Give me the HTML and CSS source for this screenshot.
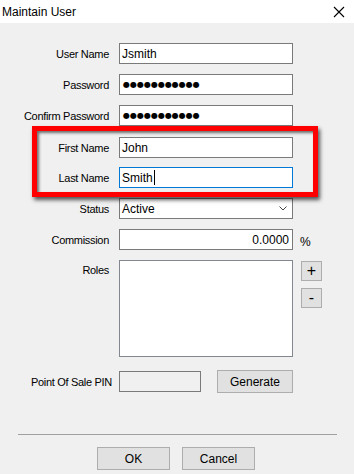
FILE: index.html
```html
<!DOCTYPE html>
<html>
<head>
<meta charset="utf-8">
<link rel="stylesheet" href="styles.css">
</head>
<body>
<div class="window">
  <div class="titlebar">
    <span class="title">Maintain User</span>
    <svg class="close" width="12" height="12" viewBox="0 0 12 12"><path d="M1 1 L11 11 M11 1 L1 11" stroke="#000" stroke-width="1.1" fill="none"/></svg>
  </div>
  <div class="content">
    <div class="form">
      <div class="row">
        <span class="lbl">User Name</span>
        <div class="field">Jsmith</div>
      </div>
      <div class="row">
        <span class="lbl">Password</span>
        <div class="field dots">●●●●●●●●●●●</div>
      </div>
      <div class="row">
        <span class="lbl">Confirm Password</span>
        <div class="field dots">●●●●●●●●●●●</div>
      </div>
      <div class="row row-first">
        <span class="lbl">First Name</span>
        <div class="field">John</div>
      </div>
      <div class="row row-last">
        <span class="lbl">Last Name</span>
        <div class="field focused">Smith<span class="caret"></span></div>
      </div>
      <div class="row">
        <span class="lbl">Status</span>
        <div class="field select">Active
          <svg class="chev" width="8" height="5" viewBox="0 0 8 5"><path d="M0.5 0.5 L4 4 L7.5 0.5" stroke="#444" stroke-width="1" fill="none"/></svg>
        </div>
      </div>
      <div class="row">
        <span class="lbl">Commission</span>
        <div class="field num">0.0000</div>
        <span class="pct">%</span>
      </div>
      <div class="row row-roles">
        <span class="lbl lbl-top">Roles</span>
        <div class="listbox"></div>
        <div class="side-btns">
          <button class="btn sq">+</button>
          <button class="btn sq">-</button>
        </div>
      </div>
      <div class="row row-pin">
        <span class="lbl lbl-pin">Point Of Sale PIN</span>
        <div class="pin-wrap">
          <div class="field pin"></div>
          <button class="btn gen">Generate</button>
        </div>
      </div>
    </div>
    <div class="highlight"></div>
    <div class="sep"></div>
    <div class="actions">
      <button class="btn act">OK</button>
      <button class="btn act">Cancel</button>
    </div>
  </div>
</div>
</body>
</html>
```
FILE: styles.css
```css
* { box-sizing: border-box; }
html, body {
  margin: 0;
  padding: 0;
  width: 354px;
  height: 474px;
  overflow: hidden;
  font-family: "Liberation Sans", Arial, sans-serif;
  color: #000;
}
.window {
  width: 354px;
  height: 474px;
  display: flex;
  flex-direction: column;
  background: #f0f0f0;
}
.titlebar {
  height: 23px;
  background: #fff;
  display: flex;
  align-items: center;
  justify-content: space-between;
  padding: 0 9px 0 2px;
}
.title {
  font-size: 12px;
  color: #000;
}
.close { display: block; }
.content {
  position: relative;
  flex: 1;
  padding-top: 20px;
}
.form {
  display: flex;
  flex-direction: column;
  gap: 10px;
}
.row {
  display: grid;
  grid-template-columns: 109px 174px auto;
  column-gap: 10px;
  align-items: center;
  font-size: 11px;
}
.row-first { margin-top: 1px; }
.row-last { margin-top: -1px; }
.lbl {
  text-align: right;
  white-space: nowrap;
  letter-spacing: -0.3px;
}
.lbl-top {
  align-self: start;
  padding-top: 4px;
}
.field {
  height: 21px;
  background: #fff;
  border: 1px solid #7a7a7a;
  padding: 0 2px;
  display: flex;
  align-items: center;
  font-size: 12px;
  white-space: nowrap;
}
.dots {
  font-family: "DejaVu Sans", sans-serif;
  font-size: 8px;
  letter-spacing: 0;
  padding-left: 3px;
}
.focused { border-color: #0078d7; }
.caret {
  display: inline-block;
  width: 1px;
  height: 15px;
  background: #000;
  margin-left: 1px;
}
.select {
  position: relative;
  justify-content: space-between;
  padding-right: 5px;
}
.num { justify-content: flex-end; padding-right: 3px; }
.pct {
  font-size: 12px;
  padding-top: 4px;
  margin-left: -3px;
}
.row-roles { align-items: start; }
.listbox {
  height: 97px;
  background: #fff;
  border: 1px solid #828790;
}
.side-btns {
  display: flex;
  flex-direction: column;
  gap: 7px;
  padding-top: 1px;
  margin-left: -2px;
}
.btn {
  font-family: "Liberation Sans", Arial, sans-serif;
  background: #e1e1e1;
  border: 1px solid #adadad;
  color: #000;
  padding: 0;
  font-size: 12px;
}
.sq {
  width: 21px;
  height: 20px;
  font-size: 16px;
  line-height: 16px;
}
.row-pin {
  margin-top: 3px;
  grid-template-columns: 112px auto;
  column-gap: 7px;
}
.pin-wrap {
  display: flex;
  align-items: center;
  gap: 16px;
}
.pin {
  width: 82px;
  background: #f0f0f0;
}
.gen {
  width: 76px;
  height: 23px;
}
.highlight {
  position: absolute;
  left: 32px;
  top: 103px;
  width: 286px;
  height: 71px;
  border: 5px solid #ff0000;
  box-shadow: 2px 3px 4px rgba(0,0,0,0.65), inset 2px 2px 3px rgba(0,0,0,0.55);
  pointer-events: none;
}
.sep {
  margin: 41px 17px 0 18px;
  height: 1px;
  background: #a0a0a0;
}
.actions {
  display: flex;
  justify-content: center;
  gap: 12px;
  margin-top: 12px;
  padding-right: 2px;
}
.act {
  width: 73px;
  height: 23px;
}
```
